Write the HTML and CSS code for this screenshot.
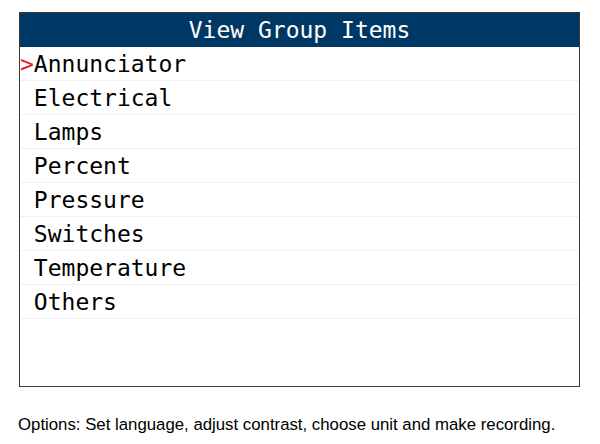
FILE: index.html
```html
<!DOCTYPE html>
<html>
<head>
<meta charset="utf-8">
<link rel="stylesheet" href="styles.css">
</head>
<body>
<div class="screen">
  <div class="title">View Group Items</div>
  <ul class="list">
    <li class="item selected"><span class="cursor">&gt;</span>Annunciator</li>
    <li class="item"><span class="cursor"></span>Electrical</li>
    <li class="item"><span class="cursor"></span>Lamps</li>
    <li class="item"><span class="cursor"></span>Percent</li>
    <li class="item"><span class="cursor"></span>Pressure</li>
    <li class="item"><span class="cursor"></span>Switches</li>
    <li class="item"><span class="cursor"></span>Temperature</li>
    <li class="item"><span class="cursor"></span>Others</li>
  </ul>
</div>
<p class="caption">Options: Set language, adjust contrast, choose unit and make recording.</p>
</body>
</html>
```
FILE: styles.css
```css
html, body {
  margin: 0;
  padding: 0;
  background: #fff;
}
body {
  padding: 12px 0 0 19px;
}
.screen {
  width: 561px;
  height: 375px;
  box-sizing: border-box;
  border: 1px solid #3a3a3a;
  background: #fff;
  display: flex;
  flex-direction: column;
}
.title {
  background: #003865;
  color: #fff;
  height: 34px;
  line-height: 34px;
  text-align: center;
  font-family: "DejaVu Sans Mono", monospace;
  font-size: 23px;
}
.list {
  list-style: none;
  margin: 0;
  padding: 0;
}
.item {
  height: 34px;
  box-sizing: border-box;
  border-bottom: 1px solid #f0f0f0;
  display: flex;
  align-items: center;
  font-family: "DejaVu Sans Mono", monospace;
  font-size: 23px;
  color: #000;
}
.cursor {
  width: 1ch;
  color: #e8202a;
  display: inline-block;
}
.caption {
  margin: 28px 0 0 -1px;
  font-family: "Liberation Sans", Arial, sans-serif;
  font-size: 16.8px;
  color: #000;
}
```
